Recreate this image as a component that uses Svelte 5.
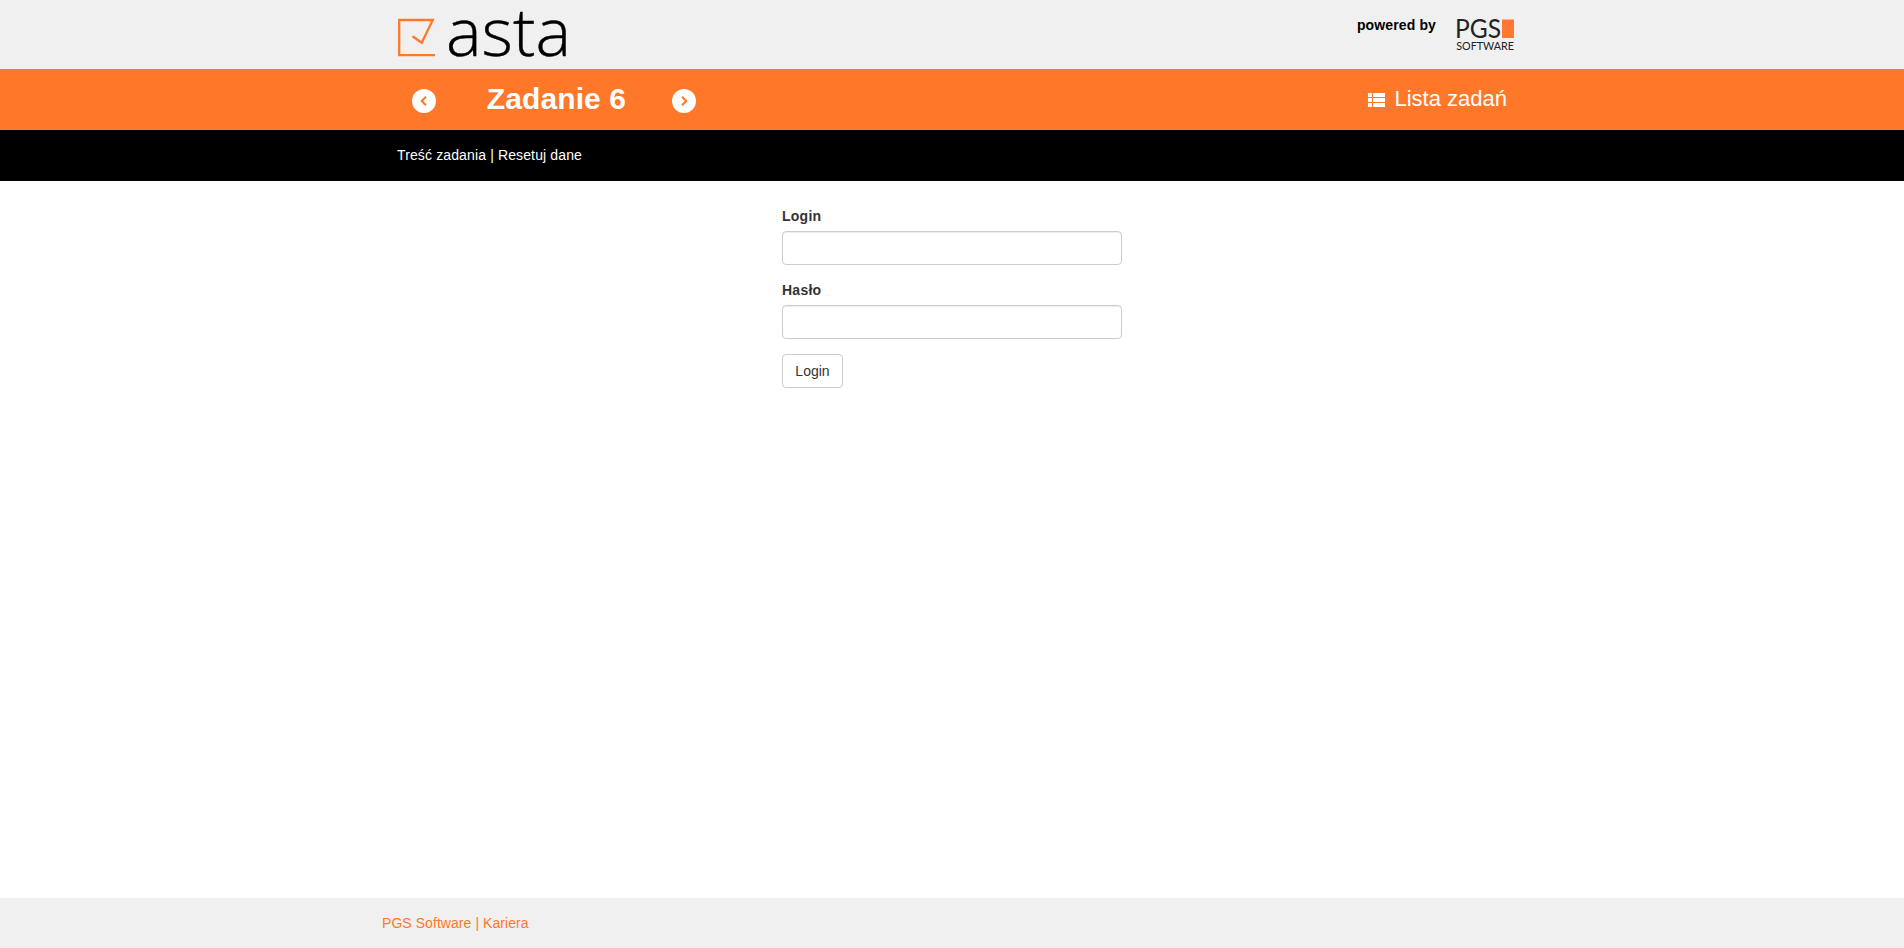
<script>
  let login = $state('');
  let password = $state('');
</script>

<div class="page">
  <header class="top">
    <div class="container">
      <svg class="asta" width="180" height="69" viewBox="0 0 180 69" role="img" aria-label="asta">
        <path d="M38 55.2H2.2V20H35.8L24.7 42.8L15.5 36.2" fill="none" stroke="#ff7728" stroke-width="2.3" />
        <text x="49" y="55.9" font-size="66.5" textLength="125" lengthAdjust="spacingAndGlyphs">asta</text>
      </svg>
      <div class="powered">
        <strong>powered by</strong>
        <svg width="62" height="55" viewBox="0 0 62 55" role="img" aria-label="PGS Software">
          <text class="pgs" x="0" y="38.3" font-size="26.5" textLength="46" lengthAdjust="spacingAndGlyphs">PGS</text>
          <rect x="47" y="19.5" width="12" height="18.5" fill="#ff7733" />
          <text class="software" x="1.2" y="49.7" font-size="12.3" textLength="57.8" lengthAdjust="spacingAndGlyphs">SOFTWARE</text>
        </svg>
      </div>
    </div>
  </header>

  <div class="task">
    <div class="container">
      <nav class="switcher">
        <a href="#prev" aria-label="Poprzednie zadanie">
          <svg width="24" height="24" viewBox="0 0 24 24"><circle cx="12" cy="12" r="12" fill="#fff" /><path d="M14 7.7L9.7 12L14 16.3" fill="none" stroke="#ff7728" stroke-width="2" /></svg>
        </a>
        <h1>Zadanie 6</h1>
        <a href="#next" aria-label="Następne zadanie">
          <svg width="24" height="24" viewBox="0 0 24 24"><circle cx="12" cy="12" r="12" fill="#fff" /><path d="M10 7.7L14.3 12L10 16.3" fill="none" stroke="#ff7728" stroke-width="2" /></svg>
        </a>
      </nav>
      <a class="list" href="#list">
        <svg width="17" height="14" viewBox="0 0 17 14" fill="#fff"><path d="M0 0h4v4H0zM5 0h12v4H5zM0 5h4v4H0zM5 5h12v4H5zM0 10h4v4H0zM5 10h12v4H5z" /></svg>
        <span>Lista zadań</span>
      </a>
    </div>
  </div>

  <div class="sub">
    <div class="container"><a href="#content">Treść zadania</a> | <a href="#reset">Resetuj dane</a></div>
  </div>

  <main>
    <form onsubmit={(e) => e.preventDefault()}>
      <label for="login">Login</label>
      <input id="login" type="text" bind:value={login} />
      <label for="password">Hasło</label>
      <input id="password" type="password" bind:value={password} />
      <button type="submit">Login</button>
    </form>
  </main>

  <footer>
    <div class="foot"><a href="#pgs">PGS Software</a> | <a href="#career">Kariera</a></div>
  </footer>
</div>

<style>
  :global(body) { margin: 0; background: #fff; }
  .page {
    display: flex;
    flex-direction: column;
    min-height: 100vh;
    font: 14px/20px "Liberation Sans", Arial, sans-serif;
    color: #333;
  }
  .page * { box-sizing: border-box; }
  a { color: inherit; text-decoration: none; }
  svg { display: block; flex: none; overflow: visible; }
  .container { width: 1140px; margin: 0 auto; padding: 0 15px; }
  .top { height: 69px; background: #f0f0f0; }
  .top .container { display: flex; justify-content: space-between; }
  .asta text { font-family: "Open Sans", sans-serif; font-weight: 300; fill: #000; stroke: #000; stroke-width: .4px; }
  .powered { display: flex; align-items: flex-start; gap: 19px; margin-right: -10px; color: #000; }
  .powered strong { margin-top: 15px; letter-spacing: .13px; }
  .pgs, .software { font-family: Lato, sans-serif; fill: #222; }
  .pgs { font-weight: 400; }
  .software { font-weight: 400; }
  .task { height: 61px; background: #ff7728; color: #fff; }
  .task .container { display: flex; justify-content: space-between; }
  .switcher { display: flex; width: 284px; margin-left: 15px; justify-content: space-between; align-items: flex-start; }
  .switcher a { margin-top: 20px; }
  h1 { margin: 13px 0 0; padding-left: 5px; font-size: 30px; line-height: 33px; font-weight: 700; letter-spacing: .1px; }
  .list { display: flex; gap: 9px; align-items: flex-start; font-size: 22px; line-height: 30px; }
  .list svg { margin-top: 24px; }
  .list span { margin-top: 15px; }
  .sub { height: 51px; padding-top: 15px; background: #000; color: #fff; letter-spacing: .13px; }
  main { flex: 1; padding-top: 25px; }
  form { width: 340px; margin: 0 auto; }
  label { display: block; margin-bottom: 5px; font-weight: 700; letter-spacing: .25px; }
  input {
    display: block;
    width: 100%;
    height: 34px;
    margin-bottom: 15px;
    padding: 6px 12px;
    font: inherit;
    border: 1px solid #ccc;
    border-radius: 4px;
    box-shadow: inset 0 1px 1px rgba(0, 0, 0, .075);
  }
  button {
    display: block;
    width: 61px;
    height: 34px;
    padding: 6px 0;
    font: inherit;
    color: #333;
    background: #fff;
    border: 1px solid #ccc;
    border-radius: 4px;
  }
  footer { height: 50px; padding-top: 15px; background: #f0f0f0; color: #ff7728; letter-spacing: .06px; }
  .foot { width: 1140px; margin: 0 auto; }
</style>
